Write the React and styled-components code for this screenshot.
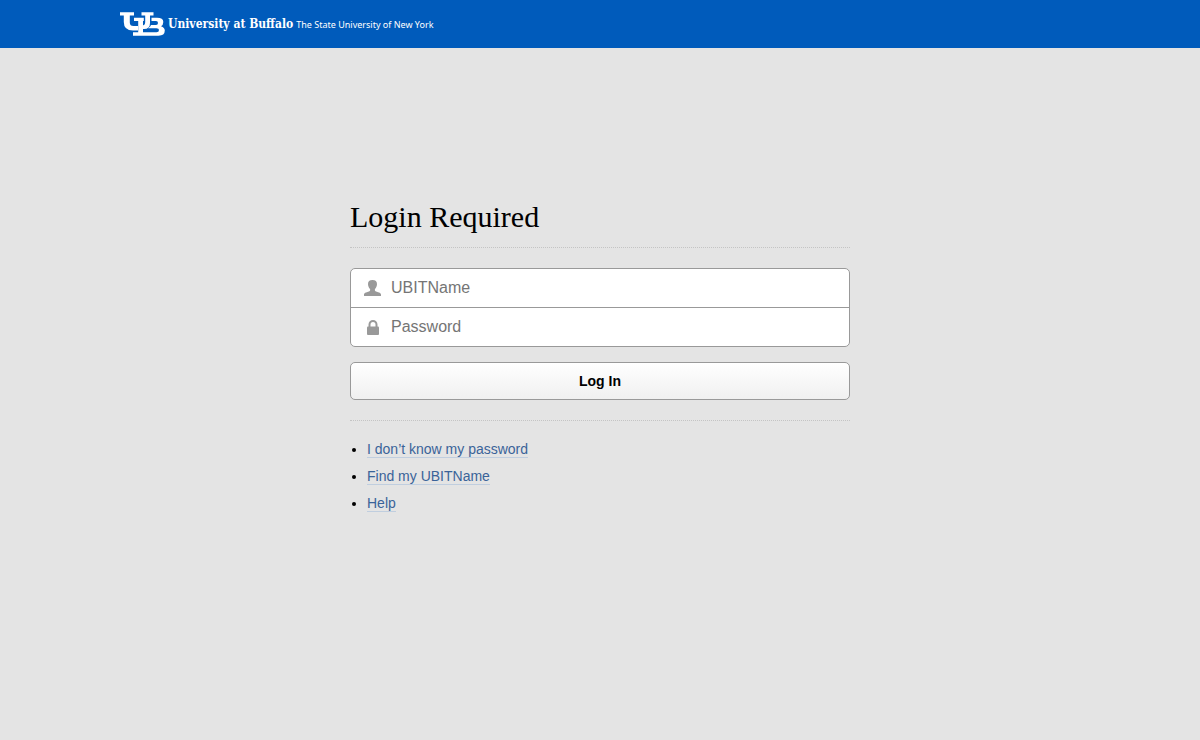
import styled, { createGlobalStyle } from 'styled-components';

export default function App() {
  return (
    <>
      <GlobalStyle />
      <Header>
        <HeaderInner>
          <Brand href="#" aria-label="University at Buffalo">
            <Logo />
            <BrandName>University at Buffalo</BrandName>
            <Tagline>The State University of New York</Tagline>
          </Brand>
        </HeaderInner>
      </Header>

      <Main>
        <Title id="loginTitle">Login Required</Title>

        <LoginForm
          onSubmit={(event) => event.preventDefault()}
          aria-labelledby="loginTitle"
        >
          <FieldGroup>
            <Field>
              <FieldIcon htmlFor="login" aria-label="UBITName">
                <UserIcon />
              </FieldIcon>
              <StyledInput
                id="login"
                name="login"
                type="text"
                placeholder="UBITName"
              />
            </Field>
            <Field>
              <FieldIcon htmlFor="password" aria-label="Password">
                <LockIcon />
              </FieldIcon>
              <StyledInput
                id="password"
                name="password"
                type="password"
                placeholder="Password"
              />
            </Field>
          </FieldGroup>
          <LoginButton type="submit">Log In</LoginButton>
        </LoginForm>

        <HelpList>
          <li>
            <HelpLink href="#">I don’t know my password</HelpLink>
          </li>
          <li>
            <HelpLink href="#">Find my UBITName</HelpLink>
          </li>
          <li>
            <HelpLink href="#">Help</HelpLink>
          </li>
        </HelpList>
      </Main>
    </>
  );
}

function Logo() {
  return (
    <svg width="45" height="24" viewBox="0 0 45 24" aria-hidden="true">
      <g fill="#fff">
        <path d="M0 .3H14V3.500H9.800V10.500Q9.800 14 13.500 14H18V18.500H13Q3.800 18.500 3.800 10V3.500H0Z" />
        <path d="M21.500 .3H33.500V3.500H30V11Q30 17 24 17H22V13.500Q25.200 13.500 25.200 10V3.500H21.500Z" />
        <path
          fillRule="evenodd"
          d="M14 5.800H23.800V9H23V20.200H36.500Q39 20.200 39 18Q39 16.200 36.500 16.200H28Q30.500 15 31 13H36Q38 13 38 11Q38 9 36 9H31.500V5.800H37Q43.300 5.800 43.300 10Q43.300 13 41 14.200Q44.800 15.500 44.800 18.500Q44.800 23.700 38.500 23.700H13V20.200H18.200V9H14Z"
        />
      </g>
    </svg>
  );
}

function UserIcon() {
  return (
    <svg width="17" height="16" viewBox="0 0 17 16" aria-hidden="true">
      <path
        fill="#999"
        d="M8.500 0C11.500 0 13.200 1.500 13 4.200C12.900 6.300 12 8 10.900 9V10.500C11.200 12 17 12 17 14.600V16H0V14.600C0 12 5.800 12 6.100 10.500V9C5 8 4.100 6.300 4 4.200C3.800 1.500 5.500 0 8.500 0Z"
      />
    </svg>
  );
}

function LockIcon() {
  return (
    <svg width="12" height="15" viewBox="0 0 12 15" aria-hidden="true">
      <path
        d="M2.500 7V4.500a3.500 3.500 0 0 1 7 0V7"
        fill="none"
        stroke="#999"
        strokeWidth="2"
      />
      <rect y="6.500" width="12" height="8.500" rx="1" fill="#999" />
    </svg>
  );
}

//Styled-Component
const GlobalStyle = createGlobalStyle`
  * {
    box-sizing: border-box;
  }

  body {
    margin: 0;
    background: #e4e4e4;
    color: #000;
    font-family: Arial, 'Liberation Sans', sans-serif;
    font-size: 14px;
  }
`;

const Header = styled.header`
  background: #005bbb;
`;

const HeaderInner = styled.div`
  display: flex;
  align-items: center;
  width: 80%;
  height: 48px;
  margin: 0 auto;
`;

const Brand = styled.a`
  display: flex;
  align-items: center;
  gap: 3px;
  color: #fff;
  text-decoration: none;
  white-space: nowrap;
`;

const BrandName = styled.span`
  font-family: 'DejaVu Serif Condensed', 'DejaVu Serif', serif;
  font-size: 12px;
  font-weight: bold;
`;

const Tagline = styled.span`
  font-family: 'Noto Sans', sans-serif;
  font-size: 9px;
`;

const Main = styled.main`
  width: 100%;
  max-width: 500px;
  margin: 0 auto;
  padding-top: 152px;
`;

const Title = styled.h1`
  margin: 0;
  padding-bottom: 14px;
  border-bottom: 1px dotted #c4c4c4;
  font-family: Georgia, 'Liberation Serif', serif;
  font-size: 30px;
  font-weight: normal;
  line-height: 33px;
`;

const LoginForm = styled.form`
  padding: 20px 0;
  border-bottom: 1px dotted #c4c4c4;
`;

const FieldGroup = styled.div`
  margin-bottom: 15px;
  border: 1px solid #999;
  border-radius: 5px;
  background: #fff;
  overflow: hidden;
`;

const Field = styled.div`
  display: flex;
  align-items: center;
  height: 38px;

  & + & {
    height: 39px;
    border-top: 1px solid #999;
  }
`;

const FieldIcon = styled.label`
  display: flex;
  justify-content: center;
  width: 40px;
  padding-left: 3px;
`;

const StyledInput = styled.input`
  flex: 1;
  min-width: 0;
  height: 100%;
  padding: 0;
  border: 0;
  outline: 0;
  background: transparent;
  font-family: inherit;
  font-size: 16px;

  &::placeholder {
    color: #757575;
  }
`;

const LoginButton = styled.button`
  display: block;
  width: 100%;
  height: 38px;
  border: 1px solid #999;
  border-radius: 5px;
  background: linear-gradient(#fff, #f0f0f0);
  color: #000;
  font-family: inherit;
  font-size: 14px;
  font-weight: bold;
  cursor: pointer;
`;

const HelpList = styled.ul`
  margin: 15px 0 0;
  padding-left: 17px;
  line-height: 27px;
`;

const HelpLink = styled.a`
  border-bottom: 1px solid #c0cedf;
  color: #3a6399;
  text-decoration: none;
`;
